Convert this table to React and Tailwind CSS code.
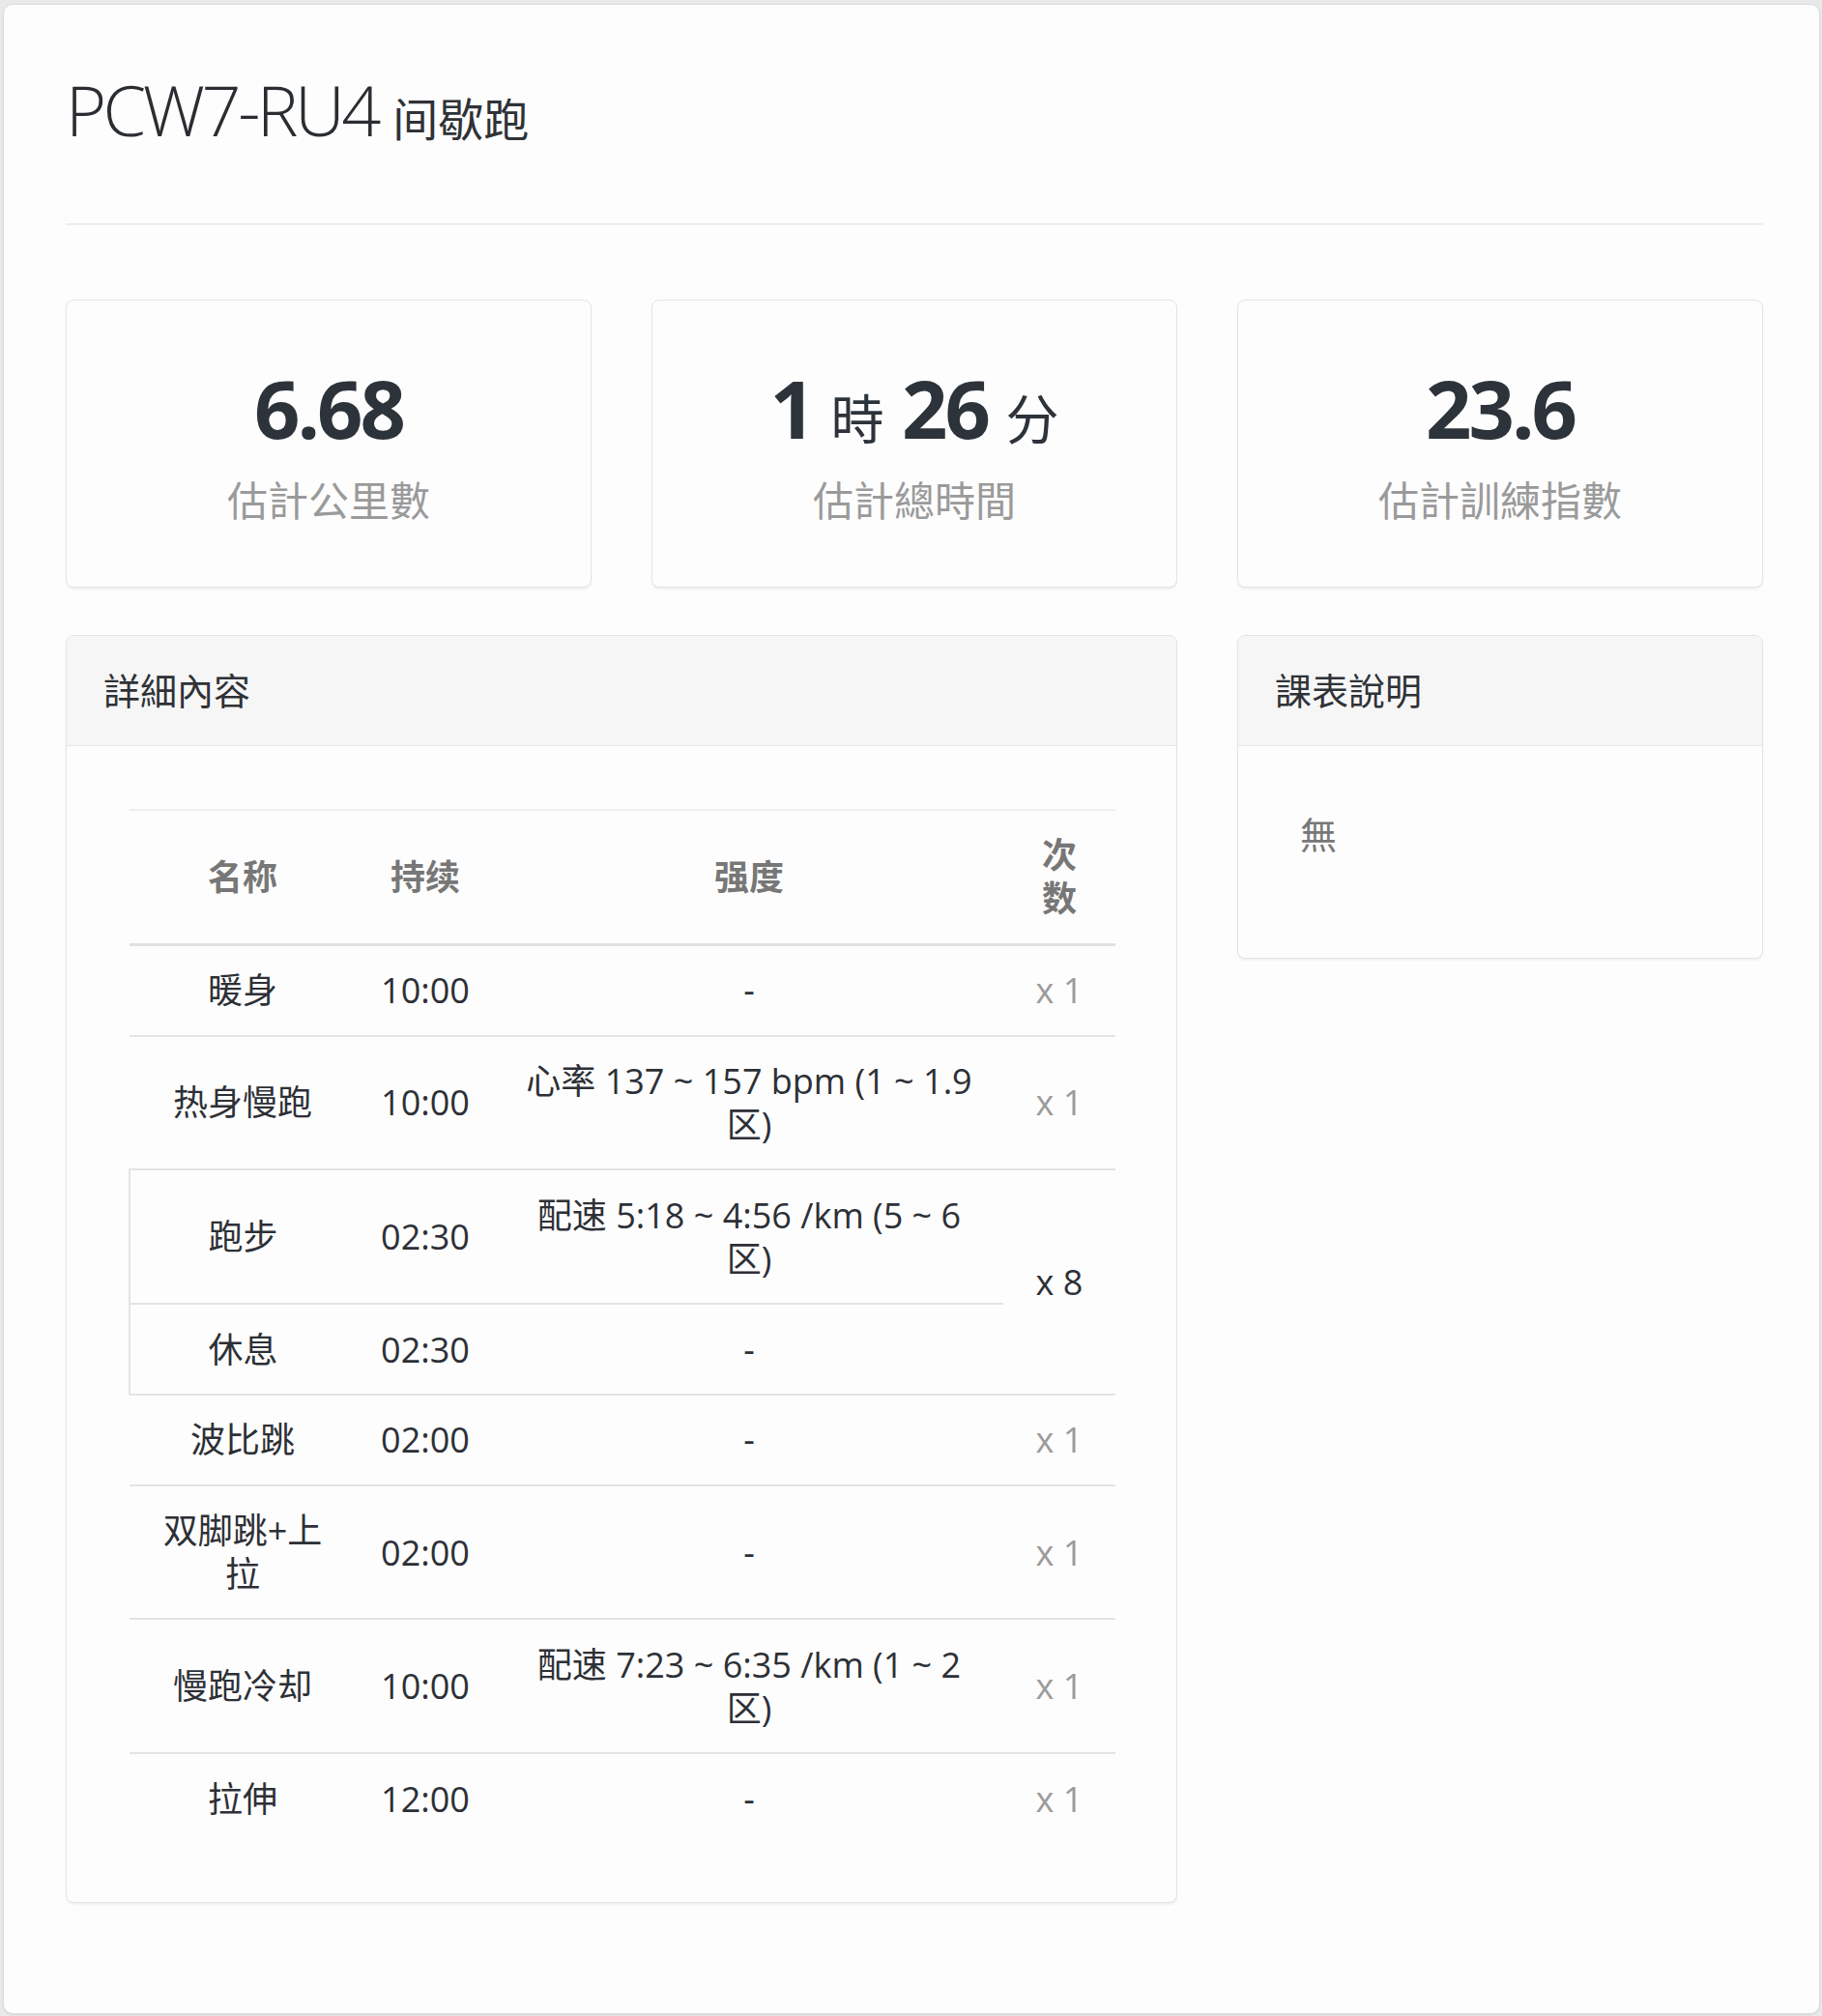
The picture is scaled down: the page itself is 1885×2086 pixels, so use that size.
import React from "react";

const FONT = { fontFamily: '"Open Sans", "Noto Sans CJK SC", sans-serif' };

function StatCard({ children, label }) {
  return (
    <div className="h-[298px] rounded-[8px] border border-[#e4e4e4] bg-[#fdfdfd] shadow-[0_2px_2px_rgba(0,0,0,0.05)] flex flex-col items-center pt-[61px]">
      <div className="h-[100px] leading-[100px] text-[83px] font-bold tracking-[-3px] text-[#2d333a] whitespace-nowrap">
        {children}
      </div>
      <div className="mt-[16px] h-[60px] leading-[60px] text-[42px] text-[#9a9a9a]">{label}</div>
    </div>
  );
}

function Unit({ children }) {
  return <span className="text-[55px] font-normal leading-none tracking-normal">{children}</span>;
}

const rows = [
  { name: "暖身", dur: "10:00", int: ["-"], rep: "x 1" },
  { name: "热身慢跑", dur: "10:00", int: ["心率 137 ~ 157 bpm (1 ~ 1.9", "区)"], rep: "x 1" },
  { name: "跑步", dur: "02:30", int: ["配速 5:18 ~ 4:56 /km (5 ~ 6", "区)"], rep: "x 8", span: 2, group: true },
  { name: "休息", dur: "02:30", int: ["-"], skipRep: true, group: true },
  { name: "波比跳", dur: "02:00", int: ["-"], rep: "x 1" },
  { name: "双脚跳+上拉", dur: "02:00", int: ["-"], rep: "x 1" },
  { name: "慢跑冷却", dur: "10:00", int: ["配速 7:23 ~ 6:35 /km (1 ~ 2", "区)"], rep: "x 1" },
  { name: "拉伸", dur: "12:00", int: ["-"], rep: "x 1", last: true },
];

const heads = [["名称"], ["持续"], ["强度"], ["次", "数"]];

export default function App() {
  const cell = "px-[21px] py-[23.4px] align-middle text-center";
  return (
    <div style={FONT} className="min-h-screen bg-[#e8e9eb] pt-[4px] pl-[3px] pb-[2px]">
      <div className="w-[1880px] h-[2080px] rounded-[10px] border border-[#dcdcdc] bg-[#fdfdfd] shadow-[0_1px_2px_rgba(0,0,0,0.08)] pl-[64px] pt-[68px]">
        <div className="w-[1756px]">
          <h1 className="h-[80px] leading-[80px] text-[72px] font-light tracking-[-3.5px] text-[#2a2d31] whitespace-nowrap">
            PCW7-RU4 <span className="text-[47px] font-normal leading-none tracking-normal text-[#2f3236]">间歇跑</span>
          </h1>
          <div className="mt-[78px] h-[2px] bg-[#ededed]" />

          <div className="mt-[77px] grid grid-cols-3 gap-x-[62px]">
            <StatCard label="估計公里數">6.68</StatCard>
            <StatCard label="估計總時間">
              1 <Unit>時</Unit> 26 <Unit>分</Unit>
            </StatCard>
            <StatCard label="估計訓練指數">23.6</StatCard>
          </div>

          <div className="mt-[49px] grid grid-cols-3 gap-x-[62px] items-start">
            <div className="col-span-2 rounded-[8px] border border-[#e4e4e4] bg-[#fdfdfd] shadow-[0_2px_2px_rgba(0,0,0,0.05)] overflow-hidden">
              <div className="h-[114px] border-b border-[#e6e6e6] bg-[#f6f6f6] flex items-center pl-[38px] text-[38px] text-[#2f3236]">
                詳細內容
              </div>
              <div className="px-[64px] pt-[65px] pb-[61px]">
                <table className="w-full table-fixed border-collapse text-[36px] leading-[45px] text-[#2d3036]">
                  <colgroup>
                    <col className="w-[234px]" />
                    <col className="w-[144px]" />
                    <col className="w-[526px]" />
                    <col className="w-[116px]" />
                  </colgroup>
                  <thead>
                    <tr className="border-t-2 border-[#efefef]">
                      {heads.map((h) => (
                        <th key={h.join("")} className={`${cell} border-b-[3px] border-[#dfe1e5] font-bold text-[#777777]`}>
                          {h.map((t, i) => (
                            <React.Fragment key={i}>
                              {i > 0 && <br />}
                              {t}
                            </React.Fragment>
                          ))}
                        </th>
                      ))}
                    </tr>
                  </thead>
                  <tbody>
                    {rows.map((r) => {
                      const b = r.last ? "" : "border-b-2 border-[#e4e4e4]";
                      return (
                        <tr key={r.name}>
                          <td className={`${cell} ${b} ${r.group ? "border-l-2 border-l-[#e4e4e4]" : ""}`}>{r.name}</td>
                          <td className={`${cell} ${b}`}>{r.dur}</td>
                          <td className={`${cell} ${b}`}>
                            {r.int.map((t, i) => (
                              <React.Fragment key={i}>
                                {i > 0 && <br />}
                                {t}
                              </React.Fragment>
                            ))}
                          </td>
                          {!r.skipRep && (
                            <td
                              rowSpan={r.span || 1}
                              className={`${cell} ${b} whitespace-nowrap ${r.span ? "text-[#2d3036]" : "text-[#9b9b9b]"}`}
                            >
                              {r.rep}
                            </td>
                          )}
                        </tr>
                      );
                    })}
                  </tbody>
                </table>
              </div>
            </div>

            <div className="rounded-[8px] border border-[#e4e4e4] bg-[#fdfdfd] shadow-[0_2px_2px_rgba(0,0,0,0.05)] overflow-hidden">
              <div className="h-[114px] border-b border-[#e6e6e6] bg-[#f6f6f6] flex items-center pl-[38px] text-[38px] text-[#2f3236]">
                課表說明
              </div>
              <div className="px-[64px] pt-[64px] pb-[101px]">
                <div className="h-[54px] leading-[54px] text-[38px] text-[#777777]">無</div>
              </div>
            </div>
          </div>
        </div>
      </div>
    </div>
  );
}
